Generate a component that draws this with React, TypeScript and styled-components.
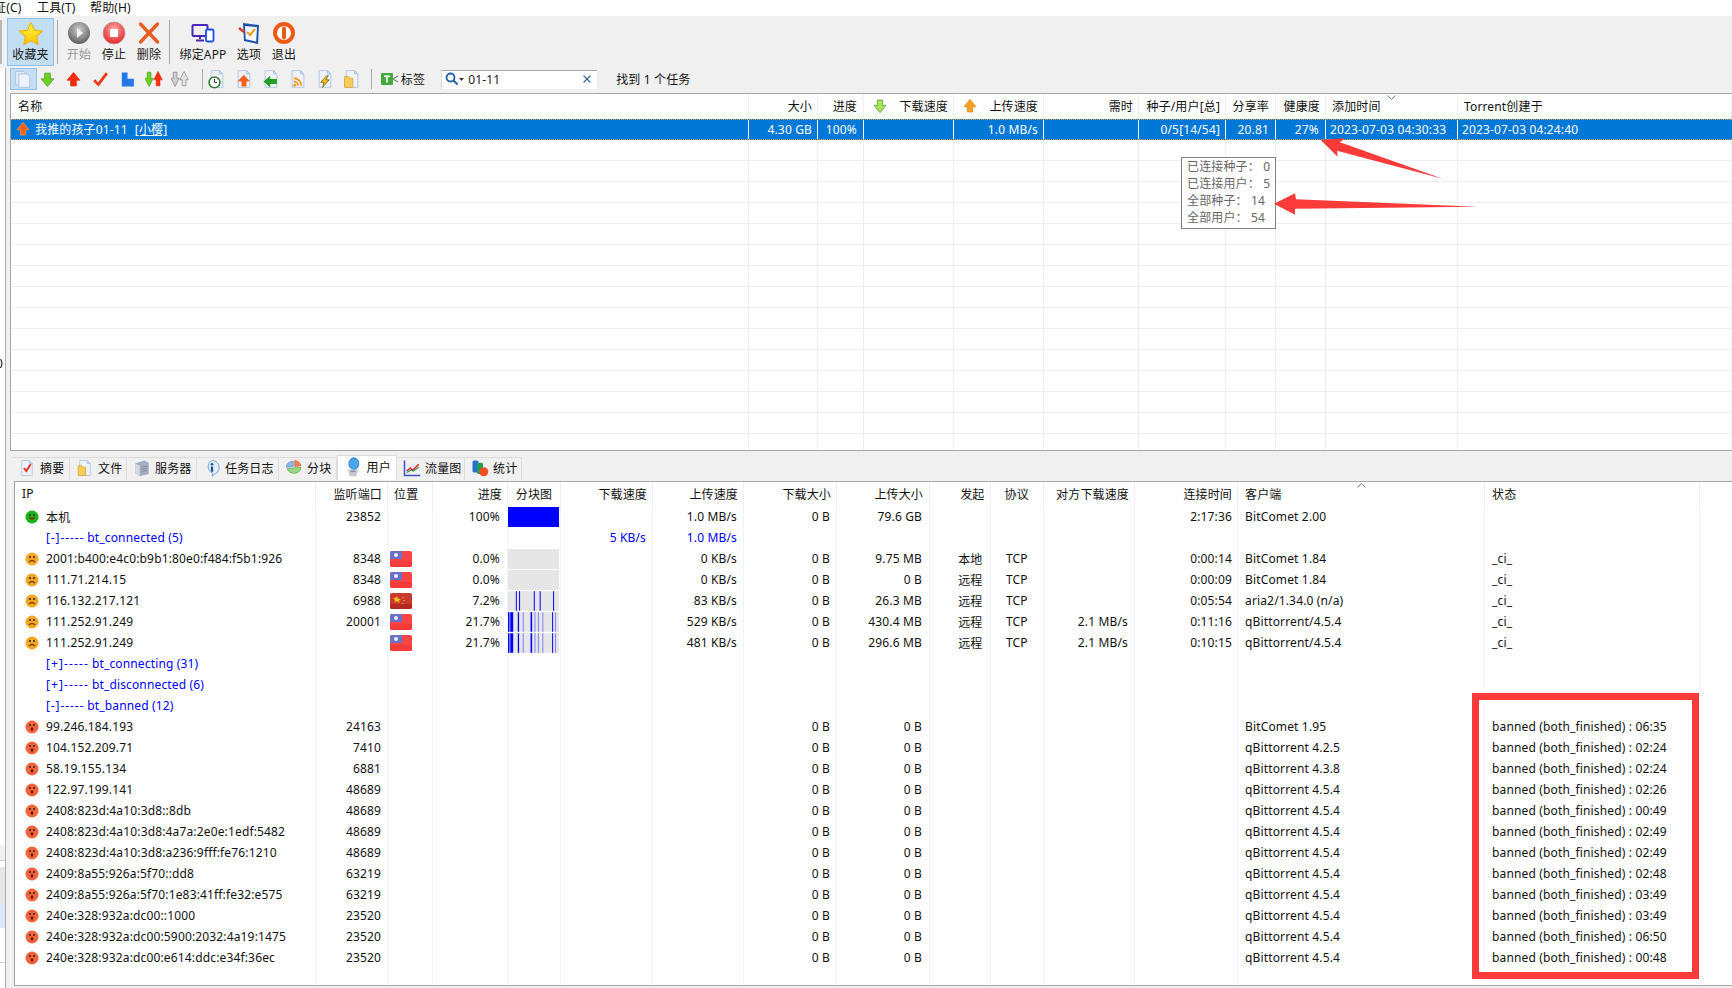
import React, { FC } from "react";
import styled, { createGlobalStyle } from "styled-components";
import { X } from "lucide-react";

const GlobalStyle = createGlobalStyle`
  html, body { margin: 0; padding: 0; background: #f0f0f0; overflow: hidden; }
  body { font-family: "Noto Sans", "Noto Sans CJK SC", sans-serif; font-size: 12px; color: #111; letter-spacing: .15px; }
`;

type Align = "l" | "r" | "c";

const UPPER_COLS = "738px 69px 46px 90px 90px 95px 87px 50px 50px 132px 1fr";
const LOWER_COLS =
  "300.5px 72.5px 45px 75px 53px 92px 91px 93px 93px 60.5px 53.5px 91px 103px 247px 215px 1fr";

/* ---------- icons ---------- */
const Page = () => (
  <>
    <path d="M5 2h10l4 4v16H5z" fill="#eef3fb" stroke="#a9bfdc" />
    <path d="M15 2v4h4z" fill="#cfdcf0" stroke="#a9bfdc" />
  </>
);

const Svg: FC<{ size?: number; children: React.ReactNode }> = ({ size = 18, children }) => (
  <svg width={size} height={size} viewBox="0 0 24 24">
    {children}
  </svg>
);

const StarIcon = () => (
  <svg width="26" height="26" viewBox="0 0 24 24">
    <defs>
      <linearGradient id="star" x1="0" y1="0" x2="0" y2="1">
        <stop offset="0" stopColor="#fff64a" />
        <stop offset="1" stopColor="#ffc400" />
      </linearGradient>
    </defs>
    <path d="M12 1.500l3.200 6.900 7.300.9-5.400 5 1.500 7.400L12 18.100l-6.600 3.600 1.500-7.400-5.400-5 7.300-.9z" fill="url(#star)" stroke="#f0b000" strokeLinejoin="round" />
  </svg>
);
const StartIcon = () => (
  <svg width="24" height="24" viewBox="0 0 24 24">
    <defs>
      <radialGradient id="ball" cx=".5" cy=".35" r=".7">
        <stop offset="0" stopColor="#cfcfcf" />
        <stop offset="1" stopColor="#555" />
      </radialGradient>
    </defs>
    <circle cx="12" cy="12" r="11" fill="url(#ball)" />
    <path d="M10 7l6 5-6 5z" fill="#f2f2f2" />
  </svg>
);
const StopIcon = () => (
  <svg width="24" height="24" viewBox="0 0 24 24">
    <defs>
      <radialGradient id="stopball" cx=".5" cy=".35" r=".7">
        <stop offset="0" stopColor="#ffb0b0" />
        <stop offset="1" stopColor="#e01818" />
      </radialGradient>
    </defs>
    <circle cx="12" cy="12" r="11" fill="url(#stopball)" stroke="#b9a5a5" strokeWidth=".8" />
    <rect x="8" y="8" width="8" height="8" rx="1" fill="#fff" />
  </svg>
);
const DeleteIcon = () => (
  <svg width="24" height="24" viewBox="0 0 24 24">
    <path d="M3.500 3l17 18M20.500 3L3.500 21" stroke="#ea5d22" strokeWidth="3.400" strokeLinecap="round" />
  </svg>
);
const BindIcon = () => (
  <svg width="24" height="24" viewBox="0 0 24 24">
    <rect x="1.500" y="4" width="15" height="11" rx="1" fill="none" stroke="#4a25b8" strokeWidth="2" />
    <path d="M9 15v3M5 19.500h8" stroke="#4a25b8" strokeWidth="2" />
    <rect x="15" y="8.500" width="7.500" height="12" rx="1.500" fill="#fff" stroke="#1650f0" strokeWidth="1.800" />
  </svg>
);
const OptionIcon = () => (
  <svg width="24" height="24" viewBox="0 0 24 24">
    <path d="M6 2l16 2-1 19-14-3z" fill="#1b52a8" />
    <path d="M8 5l12 1.200-.8 14.300-10.500-2.300z" fill="#f5f9ff" />
    <path d="M2 7l5 4" stroke="#e03a2a" strokeWidth="2.600" />
    <path d="M10 11l3 3 5-6" fill="none" stroke="#f0a020" strokeWidth="2.200" />
  </svg>
);
const ExitIcon = () => (
  <svg width="24" height="24" viewBox="0 0 24 24">
    <circle cx="12" cy="12" r="9" fill="#fff" stroke="#ee5a14" strokeWidth="4" />
    <rect x="10" y="5.500" width="4" height="13" rx="2" fill="#ee5a14" />
  </svg>
);

const ArrowDown: FC<{ fill?: string; stroke?: string }> = ({ fill = "#6fd020", stroke = "#3f9a10" }) => (
  <path d="M8 3h8v8h5l-9 11-9-11h5z" fill={fill} stroke={stroke} strokeLinejoin="round" />
);
const ArrowUp: FC<{ fill?: string; stroke?: string }> = ({ fill = "#ff2a10", stroke = "#d82000" }) => (
  <path d="M8 21h8v-8h5L12 2 3 13h5z" fill={fill} stroke={stroke} strokeLinejoin="round" />
);

const PagesIcon = () => (
  <Svg size={20}>
    <path d="M3 3h10l3 3v13H3z" fill="#dfe9f7" stroke="#a9bfdc" />
    <path d="M7 6h10l3 3v13H7z" fill="#eef3fb" stroke="#a9bfdc" />
  </Svg>
);
const DualIcon: FC<{ grey?: boolean }> = ({ grey }) => (
  <Svg size={18}>
    <g transform="translate(-2 0) scale(.62 1)">
      <ArrowDown fill={grey ? "#cfcfcf" : "#70d020"} stroke={grey ? "#777" : "#3f9a10"} />
    </g>
    <g transform="translate(10 0) scale(.62 1)">
      <ArrowUp fill={grey ? "#e4e4e4" : "#ff3010"} stroke={grey ? "#777" : "#d82000"} />
    </g>
  </Svg>
);
const PageClock = () => (
  <Svg size={20}>
    <Page />
    <circle cx="9" cy="16" r="6.500" fill="#fff" stroke="#2c7a2c" strokeWidth="1.800" />
    <path d="M9 12v4h3" fill="none" stroke="#333" strokeWidth="1.200" />
  </Svg>
);
const PageUp = () => (
  <Svg size={20}>
    <Page />
    <path d="M12 7l7 8h-4v6H9v-6H4z" fill="#f4611c" />
  </Svg>
);
const PageLeft = () => (
  <Svg size={20}>
    <Page />
    <path d="M3 15l8-7v4h8v6h-8v4z" fill="#20a020" />
  </Svg>
);
const PageRss = () => (
  <Svg size={20}>
    <Page />
    <path d="M7 11a9 9 0 019 9M7 15a5 5 0 015 5" fill="none" stroke="#f59a23" strokeWidth="2.400" />
    <circle cx="8" cy="19.500" r="1.700" fill="#f59a23" />
  </Svg>
);
const PageBolt = () => (
  <Svg size={20}>
    <Page />
    <path d="M14 8l-7 8h4l-2 6 8-9h-4l3-5z" fill="#f5c518" stroke="#6b5410" strokeWidth=".9" />
  </Svg>
);
const PageFolder = () => (
  <Svg size={20}>
    <Page />
    <path d="M3 9h5l2 2h3v11H3z" fill="#f5cc58" stroke="#d8a530" />
  </Svg>
);
const TagIcon = () => (
  <svg width="18" height="14" viewBox="0 0 18 14">
    <rect x="0" y="1" width="12" height="12" rx="1" fill="#47a83c" />
    <rect x="3" y="3.500" width="6" height="1.600" fill="#fff" />
    <rect x="5.200" y="3.500" width="1.600" height="7" fill="#fff" />
    <path d="M12 7l5-3M12 7l5 3" stroke="#7a8a7a" strokeWidth="1.200" />
  </svg>
);
const SearchIcon = () => (
  <svg width="20" height="14" viewBox="0 0 20 14">
    <circle cx="5.500" cy="5.500" r="4" fill="none" stroke="#1c5fa8" strokeWidth="1.800" />
    <path d="M8.500 8.500l4 4" stroke="#1c5fa8" strokeWidth="2" />
    <path d="M14 6h5l-2.500 3z" fill="#333" />
  </svg>
);
const HeadDown = () => (
  <Svg size={16}>
    <ArrowDown fill="#a8e060" stroke="#3f9a10" />
  </Svg>
);
const HeadUp = () => (
  <Svg size={16}>
    <ArrowUp fill="#f8a020" stroke="#e08010" />
  </Svg>
);
const Chevron: FC<{ up?: boolean }> = ({ up }) => (
  <svg width="9" height="5" viewBox="0 0 9 5">
    <path d={up ? "M.5 4.500l4-4 4 4" : "M.5 .5l4 4 4-4"} fill="none" stroke="#808080" />
  </svg>
);

const TabCheck = () => (
  <Svg>
    <Page />
    <path d="M8 12l3 4 6-9" fill="none" stroke="#e83020" strokeWidth="2.600" />
  </Svg>
);
const TabFile = () => (
  <Svg>
    <Page />
    <path d="M3 9h5l2 2h3v11H3z" fill="#f5cc58" stroke="#d8a530" />
  </Svg>
);
const TabServer = () => (
  <Svg>
    <path d="M3 6l12-4 6 3v15l-12 3-6-4z" fill="#a4acc0" />
    <path d="M3 6l6 3v14l-6-4z" fill="#d3d7e2" />
    <path d="M11 11l8-2M11 14l8-2M11 17l8-2" stroke="#7f879c" />
  </Svg>
);
const TabInfo = () => (
  <Svg>
    <path d="M12 2a10 9.500 0 017 16l-7 5 1-4A10 9.500 0 0112 2z" fill="#e2eefb" stroke="#5c8dc8" />
    <circle cx="12" cy="7" r="1.800" fill="#1d4f9c" />
    <rect x="10.500" y="10" width="3" height="7" fill="#1d4f9c" />
  </Svg>
);
const TabPie = () => (
  <Svg>
    <path d="M11 3a9 7 0 00-9 8l9-1z" fill="#8fb8e8" stroke="#5c8dc8" />
    <path d="M13 2a9 7 0 018 7l-8 1z" fill="#f2825a" stroke="#d86030" />
    <path d="M3 13l9-1 9-1a9 7 0 01-18 2z" fill="#9bd884" stroke="#5ca848" />
  </Svg>
);
const TabUser = () => (
  <Svg size={20}>
    <ellipse cx="13" cy="8" rx="6" ry="7" fill="#4aa6ee" stroke="#2070c0" />
    <path d="M6 15h12l-2 8H8z" fill="#c4c8d2" />
    <path d="M9 17h6" stroke="#80869a" strokeWidth="1.500" />
  </Svg>
);
const TabChart = () => (
  <Svg>
    <path d="M2 2v20h21" fill="none" stroke="#4050c8" strokeWidth="2" />
    <path d="M5 16l5-4 3 3 8-8" fill="none" stroke="#e02030" strokeWidth="2" />
    <path d="M5 18l5-3 4 1 7-5" fill="none" stroke="#20a040" strokeWidth="1.500" />
  </Svg>
);
const TabStats = () => (
  <Svg>
    <rect x="2" y="2" width="8" height="16" rx="2" fill="#2a6fd0" />
    <rect x="8" y="5" width="8" height="15" rx="2" fill="#20a050" />
    <circle cx="17" cy="17" r="6" fill="#f05020" />
  </Svg>
);

type FaceKind = "happy" | "sad" | "ban";
const Face: FC<{ kind: FaceKind }> = ({ kind }) => {
  const fill = kind === "happy" ? "#14b414" : kind === "sad" ? "#f5a623" : "#f5633a";
  return (
    <svg width="14" height="14" viewBox="0 0 14 14">
      <circle cx="7" cy="7" r="6.500" fill={fill} />
      <circle cx="5" cy="5" r="1" fill="#222" />
      <circle cx="9" cy="5" r="1" fill="#222" />
      {kind === "happy" && <path d="M3.500 7.500q3.500 4 7 0z" fill="#a01010" />}
      {kind === "sad" && <path d="M4 10q3-3 6 0" fill="none" stroke="#7a3a00" strokeWidth="1.200" />}
      {kind === "ban" && <ellipse cx="7" cy="9" rx="1.300" ry="1.800" fill="#601000" />}
    </svg>
  );
};

const Flag: FC<{ cn?: boolean }> = ({ cn }) =>
  cn ? (
    <svg width="22" height="16" viewBox="0 0 22 16">
      <rect width="22" height="16" rx="2" fill="#c93a2c" />
      <rect y="11" width="22" height="5" rx="2" fill="#b52a20" />
      <path d="M7 3l1.100 2.700 2.900.2-2.200 1.900.7 2.800L7 8.100 4.500 9.600l.7-2.800L3 4.900l2.900-.2z" fill="#f8c820" />
      <path d="M13 4v1M14 7v1M13 10v1" stroke="#f8c820" />
    </svg>
  ) : (
    <svg width="22" height="16" viewBox="0 0 22 16">
      <rect width="22" height="16" rx="2" fill="#ff4444" />
      <rect y="10" width="22" height="6" rx="2" fill="#f53a3a" />
      <path d="M0 2a2 2 0 012-2h10v8H0z" fill="#6a72c8" />
      <circle cx="6" cy="4" r="2" fill="#eef" />
    </svg>
  );

type Bar = [number, number, boolean?];
const P7: Bar[] = [[8, 1], [11.300, 1], [26.300, 1], [32.300, 1], [46, 1]];
const P21: Bar[] = [
  [0, 1.500], [2.300, 3], [10, 1.300], [15, 1, true], [23, 1.600], [27, 1, true],
  [30.500, 1, true], [35, 1, true], [45, 1], [48, 1, true],
];
const PieceChart: FC<{ bars: Bar[] }> = ({ bars }) => (
  <svg width="52" height="20" viewBox="0 0 52 20">
    <rect width="52" height="20" fill="#e6e6e6" />
    {bars.map(([x, w, light], i) => (
      <rect key={i} x={x} y="0" width={w} height="20" fill={light ? "#7f7fff" : "#0000ff"} />
    ))}
  </svg>
);

/* ---------- layout ---------- */
const Screen = styled.div`
  position: relative;
  width: 1732px;
  height: 988px;
  overflow: hidden;
`;
const MenuBar = styled.div`
  display: flex;
  height: 16px;
  background: #fff;
  line-height: 15px;
  overflow: hidden;
`;
const MenuItem = styled.span<{ $w: number }>`
  width: ${(p) => p.$w}px;
  flex: none;
  white-space: nowrap;
  &:first-child { margin-left: -6px; }
`;
const MainToolbar = styled.div`
  display: flex;
  height: 50px;
  padding-top: 2px;
  box-sizing: border-box;
  align-items: stretch;
`;
const LeftEdge = styled.div`
  width: 2px;
  margin: 2px 5px 2px 0;
  background: #b8b8b8;
`;
const Sep = styled.div<{ $ml?: number; $mr?: number; $h?: number }>`
  width: 1px;
  flex: none;
  align-self: center;
  height: ${(p) => p.$h ?? 44}px;
  background: #a8a8a8;
  margin-left: ${(p) => p.$ml ?? 0}px;
  margin-right: ${(p) => p.$mr ?? 0}px;
`;
const BigButton = styled.div<{ $w: number; $on?: boolean; $off?: boolean }>`
  width: ${(p) => p.$w}px;
  flex: none;
  box-sizing: border-box;
  display: flex;
  flex-direction: column;
  align-items: center;
  padding-top: ${(p) => (p.$on ? 2 : 3)}px;
  color: ${(p) => (p.$off ? "#9a9a9a" : "#1a1a1a")};
  white-space: nowrap;
  line-height: 16px;
  background: ${(p) => (p.$on ? "#c3ddf3" : "transparent")};
  border: ${(p) => (p.$on ? "1px solid #8fc1ea" : "none")};
  svg { margin-bottom: ${(p) => (p.$on ? 0 : 2)}px; }
`;
const Body = styled.div`
  display: flex;
  height: 922px;
`;
const SidePanel = styled.div`
  width: 5px;
  flex: none;
  margin-top: 2px;
  box-sizing: content-box;
  border-right: 1px solid #b0b0b0;
  display: flex;
  flex-direction: column;
  overflow: hidden;
`;
const SideBlock = styled.div<{ $h?: number; $bg: string; $line?: boolean }>`
  height: ${(p) => (p.$h ? `${p.$h}px` : "auto")};
  flex: ${(p) => (p.$h ? "none" : 1)};
  background: ${(p) => p.$bg};
  border-bottom: ${(p) => (p.$line ? "1px solid #d4d4d4" : "none")};
  box-sizing: border-box;
`;
const SideDigit = styled.span`
  display: block;
  margin: 289px 0 0 -4px;
  line-height: 14px;
`;
const Content = styled.div`
  flex: 1;
  min-width: 0;
  padding-left: 4px;
  display: flex;
  flex-direction: column;
`;
const SmallToolbar = styled.div`
  display: flex;
  align-items: center;
  height: 22px;
  margin-top: 2px;
  white-space: nowrap;
`;
const SmallButton = styled.div<{ $on?: boolean; $w?: number }>`
  width: ${(p) => p.$w ?? 26.7}px;
  height: 22px;
  flex: none;
  box-sizing: border-box;
  display: flex;
  align-items: center;
  justify-content: center;
  background: ${(p) => (p.$on ? "#c3ddf3" : "transparent")};
  border: ${(p) => (p.$on ? "1px solid #8fc1ea" : "none")};
`;
const ShiftBack = styled.div`
  display: flex;
  margin-left: -3px;
`;
const TagLabel = styled.div`
  display: flex;
  align-items: center;
  gap: 2px;
  margin-left: 9px;
  padding-bottom: 1px;
`;
const SearchBox = styled.div`
  width: 156px;
  height: 19px;
  margin-left: 16px;
  box-sizing: border-box;
  background: #fff;
  border-top: 1px solid #a8a8a8;
  border-left: 1px solid #d8d8d8;
  display: flex;
  align-items: center;
  padding: 0 0 1px 3px;
  gap: 3px;
  color: #222;
  svg:last-child { margin-left: auto; margin-right: 4px; color: #34699c; }
`;
const FindText = styled.span`
  margin-left: 19px;
  padding-bottom: 1px;
`;

const UpperFrame = styled.div`
  margin-top: 3px;
  height: 358px;
  box-sizing: border-box;
  background: #fff;
  border-top: 1px solid #a6a6a6;
  border-left: 1px solid #a6a6a6;
  border-bottom: 1px solid #a6a6a6;
  overflow: hidden;
`;
const GridRow = styled.div<{ $cols: string; $h: number }>`
  display: grid;
  grid-template-columns: ${(p) => p.$cols};
  height: ${(p) => p.$h}px;
  box-sizing: border-box;
`;
const SelectedRow = styled(GridRow)`
  background: #0078d7;
  color: #fff;
  border-top: 1px dotted #e8a050;
  border-bottom: 1px dotted #e8a050;
`;
const Cell = styled.div<{ $a?: Align; $pad?: number; $line?: string; $under?: string; $color?: string; $lift?: number }>`
  display: flex;
  align-items: center;
  box-sizing: border-box;
  min-width: 0;
  white-space: nowrap;
  justify-content: ${(p) => (p.$a === "r" ? "flex-end" : p.$a === "c" ? "center" : "flex-start")};
  padding-bottom: ${(p) => p.$lift ?? 1}px;
  padding-right: ${(p) => (p.$a === "r" ? p.$pad ?? 6 : 0)}px;
  padding-left: ${(p) => (p.$a === "r" || p.$a === "c" ? 0 : p.$pad ?? 6)}px;
  border-right: ${(p) => (p.$line ? `1px solid ${p.$line}` : "none")};
  border-bottom: ${(p) => (p.$under ? `1px solid ${p.$under}` : "none")};
  color: ${(p) => p.$color ?? "inherit"};
`;
const HeadIcon = styled.span`
  display: flex;
  margin-right: auto;
  margin-left: 8px;
`;
const SortMark = styled.span<{ $left: number }>`
  position: absolute;
  top: 1px;
  left: ${(p) => p.$left}px;
  display: flex;
`;
const RelCell = styled(Cell)`
  position: relative;
`;
const RowIcon = styled.span`
  display: inline-flex;
  margin: 0 4px 0 -1px;
`;
const LinkText = styled.span`
  margin-left: 7px;
  text-decoration: underline;
`;
const GroupPrefix = styled.span<{ $plus?: boolean }>`
  letter-spacing: ${(p) => (p.$plus ? 1.1 : 0.9)}px;
  margin-right: 3px;
`;

const TabStrip = styled.div`
  display: flex;
  align-items: flex-end;
  height: 25px;
  margin-top: 4px;
  padding-left: 2px;
`;
const Tab = styled.div<{ $w: number; $on?: boolean }>`
  width: ${(p) => p.$w}px;
  height: ${(p) => (p.$on ? 25 : 23)}px;
  flex: none;
  box-sizing: border-box;
  display: flex;
  align-items: center;
  gap: 4px;
  padding: 0 0 2px 5px;
  background: ${(p) => (p.$on ? "#fff" : "#f0f0f0")};
  border: 1px solid #dcdcdc;
  border-bottom: none;
  border-left: ${(p) => (p.$on ? "1px solid #dcdcdc" : "1px solid transparent")};
  white-space: nowrap;
`;
const TabPanel = styled.div`
  border-left: 1px solid #fafafa;
  padding-left: 3px;
  padding-top: 1px;
  flex: none;
`;
const LowerFrame = styled.div`
  height: 505px;
  box-sizing: border-box;
  background: #fff;
  border-top: 1px solid #a6a6a6;
  border-left: 1px solid #a6a6a6;
  border-bottom: 1px solid #a6a6a6;
  display: flex;
  flex-direction: column;
  overflow: hidden;
`;
const FaceSlot = styled.span`
  display: inline-flex;
  margin: 0 7px 0 0;
`;
const PieceCell = styled.div<{ $fill?: string }>`
  margin-bottom: 1px;
  height: 20px;
  background: ${(p) => p.$fill ?? "transparent"};
  display: flex;
  border-right: 1px solid #fff;
`;
const Filler = styled.div`
  flex: 1;
  display: grid;
  grid-template-columns: ${LOWER_COLS};
`;
const Rule = styled.div`
  border-right: 1px solid #eef4fb;
`;

const Tooltip = styled.div`
  position: absolute;
  left: 1181px;
  top: 157px;
  width: 95px;
  height: 72px;
  box-sizing: border-box;
  padding: 0 0 0 5px;
  background: #fff;
  border: 1px solid #808080;
  color: #666;
  line-height: 17px;
  white-space: nowrap;
`;
const Marks = styled.svg`
  position: absolute;
  left: 0;
  top: 0;
  pointer-events: none;
`;
const RedBox = styled.div`
  position: absolute;
  left: 1472px;
  top: 693px;
  width: 227px;
  height: 286px;
  box-sizing: border-box;
  border: 7px solid #fb3a3a;
`;

/* ---------- data ---------- */
const upperHead: { t: string; a: Align; pad?: number; icon?: React.ReactNode }[] = [
  { t: "名称", a: "l", pad: 7 },
  { t: "大小", a: "r", pad: 5 },
  { t: "进度", a: "r" },
  { t: "下载速度", a: "r", pad: 5, icon: <HeadDown /> },
  { t: "上传速度", a: "r", pad: 5, icon: <HeadUp /> },
  { t: "需时", a: "r", pad: 5 },
  { t: "种子/用户[总]", a: "r", pad: 5 },
  { t: "分享率", a: "r" },
  { t: "健康度", a: "r", pad: 5 },
  { t: "添加时间", a: "l" },
  { t: "Torrent创建于", a: "l" },
];
const upperValues: [string, Align, number?][] = [
  ["4.30 GB", "r", 5],
  ["100%", "r"],
  ["", "r"],
  ["1.0 MB/s", "r", 5],
  ["", "r"],
  ["0/5[14/54]", "r", 5],
  ["20.81", "r", 6],
  ["27%", "r"],
  ["2023-07-03 04:30:33", "l", 4],
  ["2023-07-03 04:24:40", "l", 4],
];
const lowerHead: [string, Align, number?][] = [
  ["IP", "l", 7],
  ["监听端口", "r", 5],
  ["位置", "l", 6],
  ["进度", "r", 5],
  ["分块图", "c"],
  ["下载速度", "r", 5],
  ["上传速度", "r", 5],
  ["下载大小", "r", 5],
  ["上传大小", "r", 6],
  ["发起", "r", 5],
  ["协议", "c"],
  ["对方下载速度", "r", 5],
  ["连接时间", "r", 5],
  ["客户端", "l", 7],
  ["状态", "l", 7],
  ["", "l"],
];

type Peer = {
  face?: FaceKind;
  ip: string;
  port?: string;
  flag?: "tw" | "cn";
  prog?: string;
  piece?: "full" | "none" | "p7" | "p21";
  dl?: string;
  ul?: string;
  ds?: string;
  us?: string;
  org?: string;
  proto?: string;
  peer?: string;
  time?: string;
  client?: string;
  status?: string;
  group?: boolean;
};

const banned = (ip: string, port: string, client: string, t: string): Peer => ({
  face: "ban",
  ip,
  port,
  ds: "0 B",
  us: "0 B",
  client,
  status: `banned (both_finished) : ${t}`,
});
const qb = "qBittorrent 4.5.4";

const peers: Peer[] = [
  { face: "happy", ip: "本机", port: "23852", prog: "100%", piece: "full", ul: "1.0 MB/s", ds: "0 B", us: "79.6 GB", time: "2:17:36", client: "BitComet 2.00" },
  { group: true, ip: "[-]----- bt_connected (5)", dl: "5 KB/s", ul: "1.0 MB/s" },
  { face: "sad", ip: "2001:b400:e4c0:b9b1:80e0:f484:f5b1:926", port: "8348", flag: "tw", prog: "0.0%", piece: "none", ul: "0 KB/s", ds: "0 B", us: "9.75 MB", org: "本地", proto: "TCP", time: "0:00:14", client: "BitComet 1.84", status: "_ci_" },
  { face: "sad", ip: "111.71.214.15", port: "8348", flag: "tw", prog: "0.0%", piece: "none", ul: "0 KB/s", ds: "0 B", us: "0 B", org: "远程", proto: "TCP", time: "0:00:09", client: "BitComet 1.84", status: "_ci_" },
  { face: "sad", ip: "116.132.217.121", port: "6988", flag: "cn", prog: "7.2%", piece: "p7", ul: "83 KB/s", ds: "0 B", us: "26.3 MB", org: "远程", proto: "TCP", time: "0:05:54", client: "aria2/1.34.0 (n/a)", status: "_ci_" },
  { face: "sad", ip: "111.252.91.249", port: "20001", flag: "tw", prog: "21.7%", piece: "p21", ul: "529 KB/s", ds: "0 B", us: "430.4 MB", org: "远程", proto: "TCP", peer: "2.1 MB/s", time: "0:11:16", client: "qBittorrent/4.5.4", status: "_ci_" },
  { face: "sad", ip: "111.252.91.249", flag: "tw", prog: "21.7%", piece: "p21", ul: "481 KB/s", ds: "0 B", us: "296.6 MB", org: "远程", proto: "TCP", peer: "2.1 MB/s", time: "0:10:15", client: "qBittorrent/4.5.4", status: "_ci_" },
  { group: true, ip: "[+]----- bt_connecting (31)" },
  { group: true, ip: "[+]----- bt_disconnected (6)" },
  { group: true, ip: "[-]----- bt_banned (12)" },
  banned("99.246.184.193", "24163", "BitComet 1.95", "06:35"),
  banned("104.152.209.71", "7410", "qBittorrent 4.2.5", "02:24"),
  banned("58.19.155.134", "6881", "qBittorrent 4.3.8", "02:24"),
  banned("122.97.199.141", "48689", qb, "02:26"),
  banned("2408:823d:4a10:3d8::8db", "48689", qb, "00:49"),
  banned("2408:823d:4a10:3d8:4a7a:2e0e:1edf:5482", "48689", qb, "02:49"),
  banned("2408:823d:4a10:3d8:a236:9fff:fe76:1210", "48689", qb, "02:49"),
  banned("2409:8a55:926a:5f70::dd8", "63219", qb, "02:48"),
  banned("2409:8a55:926a:5f70:1e83:41ff:fe32:e575", "63219", qb, "03:49"),
  banned("240e:328:932a:dc00::1000", "23520", qb, "03:49"),
  banned("240e:328:932a:dc00:5900:2032:4a19:1475", "23520", qb, "06:50"),
  banned("240e:328:932a:dc00:e614:ddc:e34f:36ec", "23520", qb, "00:48"),
];

const LINE = "#eef4fb";

const PeerCell = styled(Cell).attrs({ $line: LINE, $lift: 2 })``;

const PeerRow: FC<{ p: Peer }> = ({ p }) => {
  const blue = p.group ? "#0000ff" : undefined;
  return (
    <GridRow $cols={LOWER_COLS} $h={21}>
      <PeerCell $pad={p.group ? 31 : 10} $color={blue}>
        {p.face && (
          <FaceSlot>
            <Face kind={p.face} />
          </FaceSlot>
        )}
        {p.group ? (
          <>
            <GroupPrefix $plus={p.ip.startsWith("[+]")}>{p.ip.slice(0, 8)}</GroupPrefix>
            {p.ip.slice(9)}
          </>
        ) : (
          p.ip
        )}
      </PeerCell>
      <PeerCell $a="r" $pad={6}>{p.port}</PeerCell>
      <PeerCell $pad={2}>{p.flag && <Flag cn={p.flag === "cn"} />}</PeerCell>
      <PeerCell $a="r" $pad={7}>{p.prog}</PeerCell>
      <Rule>
        {p.piece === "full" && <PieceCell $fill="#0000ff" />}
        {p.piece === "none" && <PieceCell $fill="#e6e6e6" />}
        {p.piece === "p7" && <PieceCell><PieceChart bars={P7} /></PieceCell>}
        {p.piece === "p21" && <PieceCell><PieceChart bars={P21} /></PieceCell>}
      </Rule>
      <PeerCell $a="r" $pad={6} $color={blue}>{p.dl}</PeerCell>
      <PeerCell $a="r" $pad={6} $color={blue}>{p.ul}</PeerCell>
      <PeerCell $a="r" $pad={6}>{p.ds}</PeerCell>
      <PeerCell $a="r" $pad={7}>{p.us}</PeerCell>
      <PeerCell $a="r" $pad={7}>{p.org}</PeerCell>
      <PeerCell $a="c">{p.proto}</PeerCell>
      <PeerCell $a="r" $pad={6}>{p.peer}</PeerCell>
      <PeerCell $a="r" $pad={5}>{p.time}</PeerCell>
      <PeerCell $pad={7}>{p.client}</PeerCell>
      <PeerCell $pad={7}>{p.status}</PeerCell>
      <Cell />
    </GridRow>
  );
};

const App: FC = () => (
  <Screen>
    <GlobalStyle />
    <MenuBar>
      <MenuItem $w={43}>证(C)</MenuItem>
      <MenuItem $w={53}>工具(T)</MenuItem>
      <MenuItem $w={50}>帮助(H)</MenuItem>
    </MenuBar>
    <MainToolbar>
      <LeftEdge />
      <BigButton $w={47} $on><StarIcon />收藏夹</BigButton>
      <Sep $ml={3} $mr={3} />
      <BigButton $w={36} $off><StartIcon />开始</BigButton>
      <BigButton $w={34}><StopIcon />停止</BigButton>
      <BigButton $w={36}><DeleteIcon />删除</BigButton>
      <Sep $ml={2} $mr={3} />
      <BigButton $w={60}><BindIcon />绑定APP</BigButton>
      <BigButton $w={32}><OptionIcon />选项</BigButton>
      <BigButton $w={38}><ExitIcon />退出</BigButton>
    </MainToolbar>
    <Body>
      <SidePanel>
        <SideBlock $h={777} $bg="#fff"><SideDigit>0</SideDigit></SideBlock>
        <SideBlock $h={16} $bg="#f0f0f0" $line />
        <SideBlock $h={6} $bg="#fff" />
        <SideBlock $h={36} $bg="#e6e6e6" />
        <SideBlock $h={25} $bg="#dbe8fb" />
        <SideBlock $h={35} $bg="#fff" $line />
        <SideBlock $bg="#fff" />
      </SidePanel>
      <Content>
        <SmallToolbar>
          <SmallButton $on><PagesIcon /></SmallButton>
          <ShiftBack>
            <SmallButton><Svg size={17}><ArrowDown /></Svg></SmallButton>
            <SmallButton><Svg size={17}><ArrowUp /></Svg></SmallButton>
            <SmallButton>
              <Svg size={17}><path d="M3 13l6 6L21 3" fill="none" stroke="#f03a1a" strokeWidth="4" /></Svg>
            </SmallButton>
            <SmallButton>
              <Svg size={17}><path d="M4 2h8v9h9v11H4z" fill="#2478e8" /></Svg>
            </SmallButton>
            <SmallButton><DualIcon /></SmallButton>
            <SmallButton><DualIcon grey /></SmallButton>
          </ShiftBack>
          <Sep $ml={8} $mr={1} $h={20} />
          <SmallButton $w={27}><PageClock /></SmallButton>
          <SmallButton $w={27}><PageUp /></SmallButton>
          <SmallButton $w={27}><PageLeft /></SmallButton>
          <SmallButton $w={27}><PageRss /></SmallButton>
          <SmallButton $w={27}><PageBolt /></SmallButton>
          <SmallButton $w={27}><PageFolder /></SmallButton>
          <Sep $ml={5} $h={20} />
          <TagLabel><TagIcon />标签</TagLabel>
          <SearchBox>
            <SearchIcon />
            01-11
            <X size={12} strokeWidth={2.500} />
          </SearchBox>
          <FindText>找到 1 个任务</FindText>
        </SmallToolbar>

        <UpperFrame>
          <GridRow $cols={UPPER_COLS} $h={25}>
            {upperHead.map((h, i) => (
              <RelCell key={i} $a={h.a} $pad={h.pad} $line="#f0f0f0">
                {h.icon && <HeadIcon>{h.icon}</HeadIcon>}
                {h.t}
                {h.t === "添加时间" && <SortMark $left={61}><Chevron /></SortMark>}
              </RelCell>
            ))}
          </GridRow>
          <SelectedRow $cols={UPPER_COLS} $h={21}>
            <Cell $pad={5} $line="#fff">
              <RowIcon>
                <Svg size={16}><ArrowUp fill="#f4611c" stroke="#f9a050" /></Svg>
              </RowIcon>
              我推的孩子01-11<LinkText>[小樱]</LinkText>
            </Cell>
            {upperValues.map(([t, a, pad], i) => (
              <Cell key={i} $a={a} $pad={pad} $line={i < 9 ? "#fff" : undefined}>{t}</Cell>
            ))}
          </SelectedRow>
          {Array.from({ length: 15 }).map((_, r) => (
            <GridRow key={r} $cols={UPPER_COLS} $h={21}>
              {upperHead.map((_, c) => (
                <Cell key={c} $line="#e9eef6" $under="#efefef" />
              ))}
            </GridRow>
          ))}
        </UpperFrame>

        <TabStrip>
          <Tab $w={58}><TabCheck />摘要</Tab>
          <Tab $w={57}><TabFile />文件</Tab>
          <Tab $w={70}><TabServer />服务器</Tab>
          <Tab $w={82}><TabInfo />任务日志</Tab>
          <Tab $w={57.500}><TabPie />分块</Tab>
          <Tab $w={60.500} $on><TabUser />用户</Tab>
          <Tab $w={68}><TabChart />流量图</Tab>
          <Tab $w={56.500}><TabStats />统计</Tab>
        </TabStrip>
        <TabPanel>
          <LowerFrame>
            <GridRow $cols={LOWER_COLS} $h={25}>
              {lowerHead.map(([t, a, pad], i) => (
                <RelCell key={i} $a={a} $pad={pad} $lift={2} $line={i < 15 ? "#f0f0f0" : undefined}>
                  {t}
                  {t === "客户端" && <SortMark $left={119}><Chevron up /></SortMark>}
                </RelCell>
              ))}
            </GridRow>
            {peers.map((p, i) => (
              <PeerRow key={i} p={p} />
            ))}
            <Filler>
              {lowerHead.slice(0, 15).map((_, i) => (
                <Rule key={i} />
              ))}
            </Filler>
          </LowerFrame>
        </TabPanel>
      </Content>
    </Body>

    <Tooltip>
      <div>已连接种子： 0</div>
      <div>已连接用户： 5</div>
      <div>全部种子： 14</div>
      <div>全部用户： 54</div>
    </Tooltip>
    <Marks width="1732" height="988" viewBox="0 0 1732 988">
      <path d="M1320.700 140L1345 138.300 1340 142.300 1442.700 178.700 1337 150.700 1337.700 156.700z" fill="#fb3a3a" />
      <path d="M1274 203.700L1295 193.300 1296 199.300 1477.300 206.700 1295 208.700 1295 214.700z" fill="#fb3a3a" />
    </Marks>
    <RedBox />
  </Screen>
);

export default App;
